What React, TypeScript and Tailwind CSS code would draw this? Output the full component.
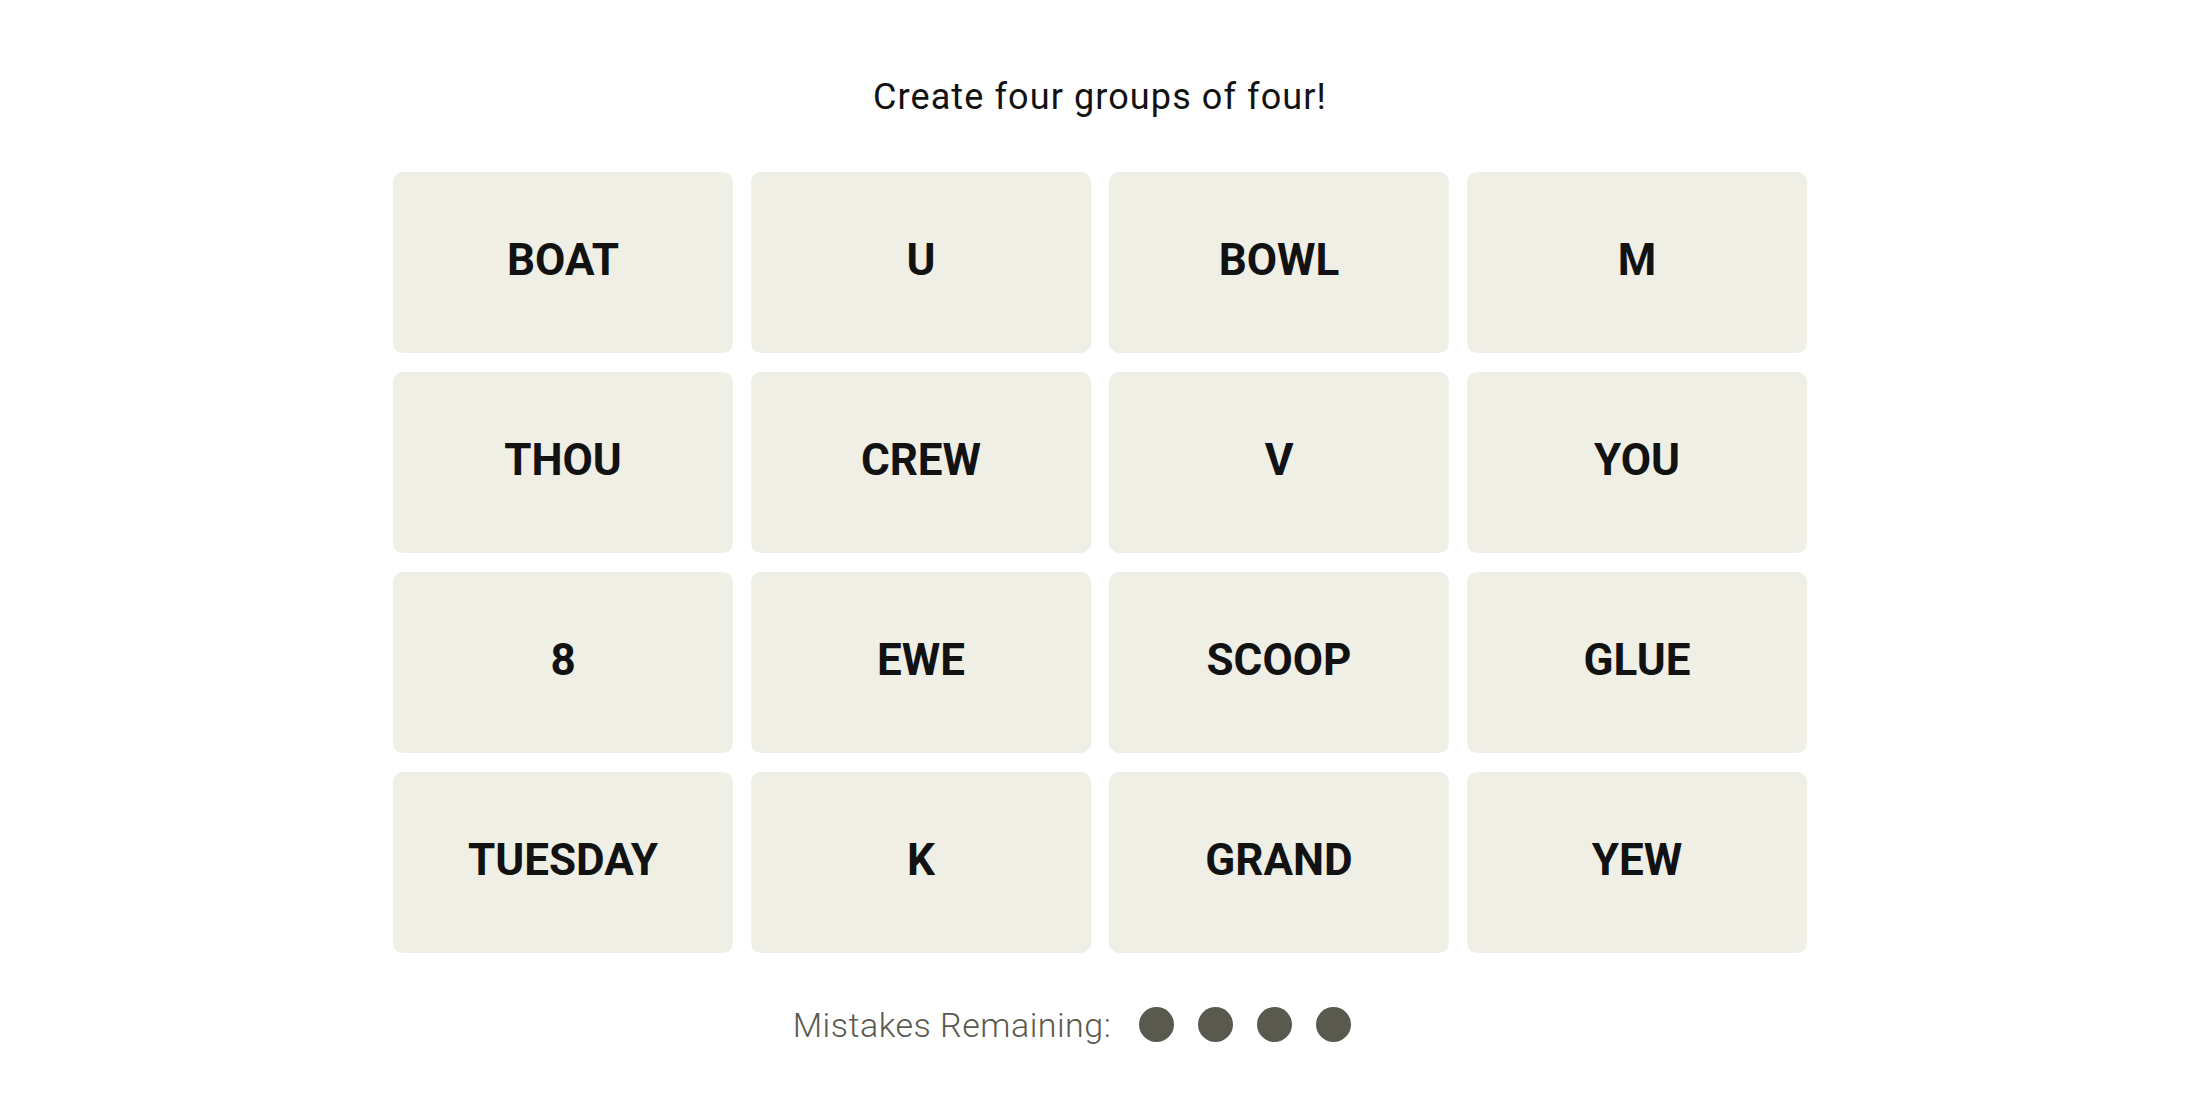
const words = [
  'BOAT', 'U', 'BOWL', 'M',
  'THOU', 'CREW', 'V', 'YOU',
  '8', 'EWE', 'SCOOP', 'GLUE',
  'TUESDAY', 'K', 'GRAND', 'YEW',
];

function Tile({ word }: { word: string }) {
  return (
    <button className="flex h-[181px] items-center justify-center rounded-[10px] bg-[#efefe6] pb-[6px] text-[44px] font-bold uppercase text-[#121212]">
      {word}
    </button>
  );
}

export default function App() {
  return (
    <div className="min-h-[1100px] bg-white font-['Roboto',sans-serif]">
      <div className="pt-[77px] text-center text-[36px] leading-[40px] tracking-[1.1px] text-[#121212]">
        Create four groups of four!
      </div>

      <div className="mx-auto mt-[55px] grid w-[1414px] grid-cols-4 gap-x-[18px] gap-y-[19px]">
        {words.map((w) => (
          <Tile key={w} word={w} />
        ))}
      </div>

      <div className="mt-[54px] flex items-start justify-center pr-[56px]">
        <span className="mt-[-2px] text-[34px] font-light leading-[40px] tracking-[0.5px] text-[#5a594e]">
          Mistakes Remaining:
        </span>
        <div className="ml-[28px] flex gap-[24px]">
          {[0, 1, 2, 3].map((i) => (
            <span key={i} className="h-[35px] w-[35px] rounded-full bg-[#5a594e]" />
          ))}
        </div>
      </div>
    </div>
  );
}
